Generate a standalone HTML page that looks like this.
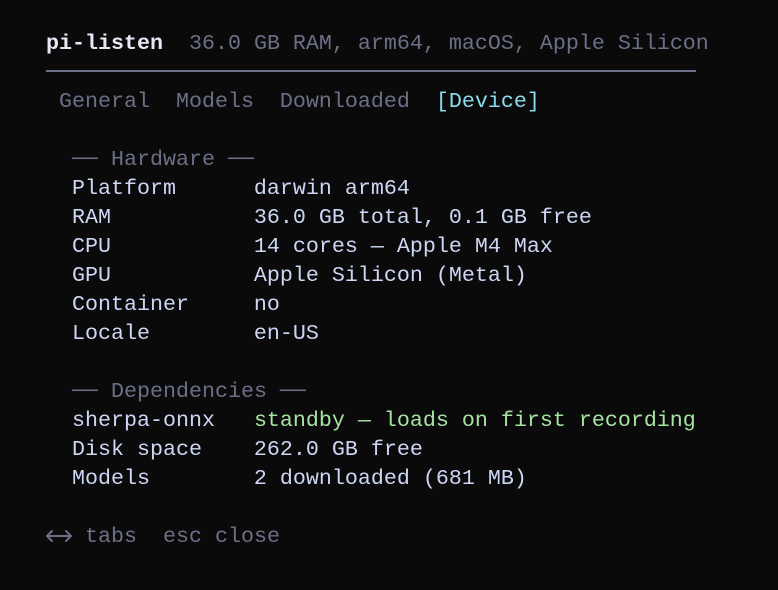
<!DOCTYPE html>
<html><head><meta charset="utf-8"><style>
html,body{margin:0;padding:0;background:#0a0a0b;width:778px;height:590px;overflow:hidden}
.r{position:absolute;left:46px;height:29px;line-height:29px;font-family:"Liberation Mono","DejaVu Sans Mono",monospace;font-size:21.67px;white-space:pre;color:#cdd6f4}
.g{color:#6c7086}.gr{color:#a6e3a1}.c{color:#89dceb}.b{font-weight:bold;color:#e6e9f5}
.rule{position:absolute;left:46px;top:70px;width:650px;height:2px;background:#6c7086}
</style></head><body>
<div class="r" style="top:29px"><span class="b">pi-listen</span>  <span class="g">36.0 GB RAM, arm64, macOS, Apple Silicon</span></div>
<div class="rule"></div>
<div class="r" style="top:87px"> <span class="g">General  Models  Downloaded  </span><span class="c">[Device]</span></div>
<div class="r" style="top:145px">  <span class="g">── Hardware ──</span></div>
<div class="r" style="top:174px">  Platform      darwin arm64</div>
<div class="r" style="top:203px">  RAM           36.0 GB total, 0.1 GB free</div>
<div class="r" style="top:232px">  CPU           14 cores — Apple M4 Max</div>
<div class="r" style="top:261px">  GPU           Apple Silicon (Metal)</div>
<div class="r" style="top:290px">  Container     no</div>
<div class="r" style="top:319px">  Locale        en-US</div>
<div class="r" style="top:377px">  <span class="g">── Dependencies ──</span></div>
<div class="r" style="top:406px">  sherpa-onnx   <span class="gr">standby — loads on first recording</span></div>
<div class="r" style="top:435px">  Disk space    262.0 GB free</div>
<div class="r" style="top:464px">  Models        2 downloaded (681 MB)</div>
<svg style="position:absolute;left:46px;top:527px" width="26" height="18" viewBox="0 0 26 18"><path d="M1 9H25M6 4L1 9L6 14M20 4L25 9L20 14" stroke="#6c7086" stroke-width="2" fill="none" stroke-linecap="round" stroke-linejoin="round"/></svg>
<div class="r g" style="top:522px;left:72px"> tabs  esc close</div>
</body></html>
